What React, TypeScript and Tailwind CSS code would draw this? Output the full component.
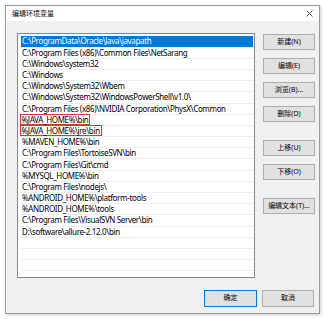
import React from 'react'

const paths = [
  'C:\\ProgramData\\Oracle\\Java\\javapath',
  'C:\\Program Files (x86)\\Common Files\\NetSarang',
  'C:\\Windows\\system32',
  'C:\\Windows',
  'C:\\Windows\\System32\\Wbem',
  'C:\\Windows\\System32\\WindowsPowerShell\\v1.0\\',
  'C:\\Program Files (x86)\\NVIDIA Corporation\\PhysX\\Common',
  '%JAVA_HOME%\\bin',
  '%JAVA_HOME%\\jre\\bin',
  '%MAVEN_HOME%\\bin',
  'C:\\Program Files\\TortoiseSVN\\bin',
  'C:\\Program Files\\Git\\cmd',
  '%MYSQL_HOME%\\bin',
  'C:\\Program Files\\nodejs\\',
  '%ANDROID_HOME%\\platform-tools',
  '%ANDROID_HOME%\\tools',
  'C:\\Program Files\\VisualSVN Server\\bin',
  'D:\\software\\allure-2.12.0\\bin',
  '',
  '',
  '',
  '',
]

const font = { fontFamily: '"Noto Sans", "Noto Sans CJK SC", sans-serif' }

function Btn({ label, className = '' }: { label: string; className?: string }) {
  return (
    <div
      className={`h-[16px] w-[52px] flex items-center justify-center bg-[#e1e1e1] border border-[#adadad] text-[7px] text-black ${className}`}
    >
      {label}
    </div>
  )
}

export default function App() {
  return (
    <div className="w-[325px] h-[319px] bg-white p-[5px]" style={font}>
      <div className="w-[315px] h-[309px] border border-[#9a9a9a] flex flex-col shadow-[1px_1px_3px_rgba(0,0,0,0.2)]">
        {/* Title bar */}
        <div className="h-[15px] bg-white flex items-center justify-between pl-[6px] pr-[4px] shrink-0">
          <span className="text-[7px] leading-none text-black">编辑环境变量</span>
          <svg width="7" height="7" viewBox="0 0 7 7" className="mr-[2px]">
            <path d="M0.5 0.5L6.5 6.5M6.5 0.5L0.5 6.5" stroke="#333" strokeWidth="0.8" />
          </svg>
        </div>

        {/* Body */}
        <div className="flex-1 bg-[#f0f0f0] pl-[11px] pt-[12px] flex flex-col">
          <div className="flex">
            <div className="w-[238px] h-[245px] bg-white border border-[#828790] pl-[2.5px] pr-[1px] pt-[2.4px] overflow-hidden">
              {paths.map((p, i) => {
                const selected = i === 0
                const marked = i === 7 || i === 8
                return (
                  <div
                    key={i}
                    className={`h-[11.2px] flex items-center text-[8px] tracking-[-0.35px] leading-none whitespace-nowrap border-b border-[#ededed] ${
                      selected ? 'bg-[#0078d7] text-white' : 'text-black'
                    }`}
                  >
                    {marked ? (
                      <span className="-ml-[1px] px-[1px] py-[0.5px] border border-[#d23a3a]">{p}</span>
                    ) : (
                      <span className="pl-[1.5px]">{p}</span>
                    )}
                  </div>
                )
              })}
            </div>

            <div className="ml-[8px] pt-[1px] flex flex-col">
              <Btn label="新建(N)" />
              <Btn label="编辑(E)" className="mt-[8px]" />
              <Btn label="浏览(B)..." className="mt-[8px]" />
              <Btn label="删除(D)" className="mt-[8px]" />
              <Btn label="上移(U)" className="mt-[18px]" />
              <Btn label="下移(O)" className="mt-[8px]" />
              <Btn label="编辑文本(T)..." className="mt-[18px]" />
            </div>
          </div>

          <div className="flex justify-end gap-[5px] pr-[5px] mt-[12px]">
            <div className="h-[17px] w-[53px] flex items-center justify-center bg-[#e1e1e1] border border-[#0078d7] text-[7px] text-black">
              确定
            </div>
            <div className="h-[17px] w-[52px] flex items-center justify-center bg-[#e1e1e1] border border-[#adadad] text-[7px] text-black">
              取消
            </div>
          </div>
        </div>
      </div>
    </div>
  )
}
